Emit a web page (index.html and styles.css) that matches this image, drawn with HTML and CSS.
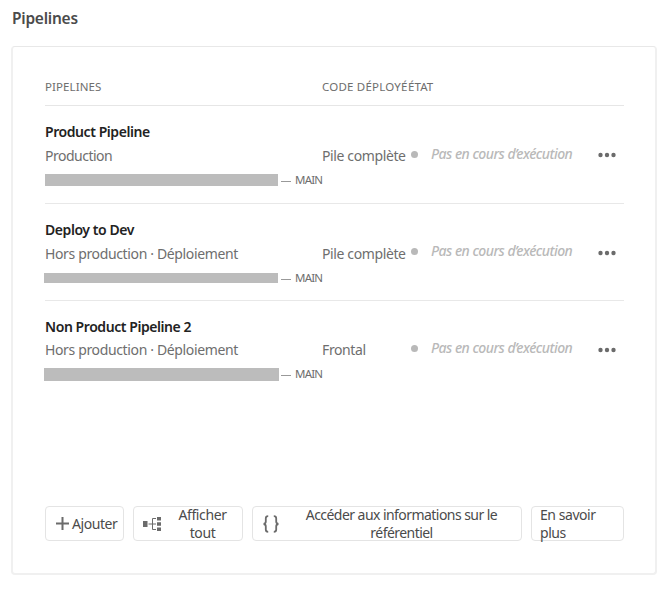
FILE: index.html
```html
<!DOCTYPE html>
<html lang="fr">
<head>
<meta charset="utf-8">
<title>Pipelines</title>
<link rel="stylesheet" href="styles.css">
</head>
<body>
<h1 class="heading">Pipelines</h1>
<main class="card">
  <div class="grid table-head"><span>PIPELINES</span><span class="head-code">CODE DÉPLOYÉ</span><span>ÉTAT</span></div>
  <section class="grid row">
    <div class="info">
      <h2 class="name">Product Pipeline</h2>
      <p class="kind kind-prod">Production</p>
      <div class="repo"><span class="redacted"></span><span class="dash"></span><span class="branch">MAIN</span></div>
    </div>
    <span class="code">Pile complète</span>
    <div class="state"><i class="dot"></i><em>Pas en cours d’exécution</em></div>
    <svg class="more" viewBox="0 0 18 6"><circle cx="2.5" cy="3" r="2.2"/><circle cx="9" cy="3" r="2.2"/><circle cx="15.5" cy="3" r="2.2"/></svg>
  </section>
  <section class="grid row row-second">
    <div class="info">
      <h2 class="name">Deploy to Dev</h2>
      <p class="kind">Hors production · Déploiement</p>
      <div class="repo"><span class="redacted redacted-thin"></span><span class="dash"></span><span class="branch">MAIN</span></div>
    </div>
    <span class="code">Pile complète</span>
    <div class="state"><i class="dot"></i><em>Pas en cours d’exécution</em></div>
    <svg class="more" viewBox="0 0 18 6"><circle cx="2.5" cy="3" r="2.2"/><circle cx="9" cy="3" r="2.2"/><circle cx="15.5" cy="3" r="2.2"/></svg>
  </section>
  <section class="grid row row-last">
    <div class="info">
      <h2 class="name">Non Product Pipeline 2</h2>
      <p class="kind">Hors production · Déploiement</p>
      <div class="repo"><span class="redacted redacted-wide"></span><span class="dash"></span><span class="branch">MAIN</span></div>
    </div>
    <span class="code">Frontal</span>
    <div class="state"><i class="dot"></i><em>Pas en cours d’exécution</em></div>
    <svg class="more" viewBox="0 0 18 6"><circle cx="2.5" cy="3" r="2.2"/><circle cx="9" cy="3" r="2.2"/><circle cx="15.5" cy="3" r="2.2"/></svg>
  </section>
  <footer class="actions">
    <button class="btn btn-add"><svg class="icon-plus" viewBox="0 0 13 13"><path d="M6.5 0v13M0 6.5h13"/></svg><span>Ajouter</span></button>
    <button class="btn btn-all"><svg class="icon-tree" viewBox="0 0 18 16"><path class="block" d="M0 5h4.5v6H0zM14 1h4v3.5h-4zM14 6.3h4v3.5h-4zM14 11.6h4v3.5h-4z"/><path class="line" d="M5.5 8h7.5M13 2.5H9.5v11H13"/></svg><span class="label">Afficher<br>tout</span></button>
    <button class="btn btn-repo"><svg class="icon-braces" viewBox="0 0 16 18"><path d="M5.2 1.2C3.2 1.2 2.8 2 2.8 3.2v3.3C2.8 8 2.2 8.8.6 9c1.6.2 2.2 1 2.2 2.5v3.3c0 1.2.4 2 2.4 2M10.8 1.2c2 0 2.4.8 2.4 2v3.3c0 1.5.6 2.3 2.2 2.5-1.6.2-2.2 1-2.2 2.5v3.3c0 1.2-.4 2-2.4 2"/></svg><span class="label">Accéder aux informations sur le<br>référentiel</span></button>
    <button class="btn btn-more"><span>En savoir<br>plus</span></button>
  </footer>
</main>
</body>
</html>
```
FILE: styles.css
```css
* { box-sizing: border-box; }
body { margin: 0; width: 662px; height: 606px; overflow: hidden; background: #fff; color: #6e6e6e; font: 14px/18px "Noto Sans", sans-serif; letter-spacing: -.45px; }
h1, h2, p { margin: 0; }
.heading { margin: 7px 0 0 12px; font-size: 15.5px; line-height: 22px; font-weight: 600; letter-spacing: -.25px; color: #4b4b4b; }
.card { width: 646px; height: 529px; margin: 17px 0 0 11px; padding: 32px 31px 32px 32px; border: 2px solid #f0f0f0; border-top: 1px solid #e8e8e8; border-radius: 4px; display: flex; flex-direction: column; }
.grid { display: grid; grid-template-columns: 277px 86px 190px 1fr; white-space: nowrap; }
.table-head { height: 27px; border-bottom: 1px solid #e6e6e6; font-size: 11.5px; line-height: 16px; letter-spacing: .1px; }
.head-code { letter-spacing: .2px; }
.row { height: 98px; padding-top: 16px; border-bottom: 1px solid #e8e8e8; }
.row-second { height: 97px; }
.row-last { border: 0; }
.name { font-size: 14px; line-height: 20px; font-weight: 600; color: #222; letter-spacing: -.43px; }
.kind { margin-top: 4px; line-height: 20px; letter-spacing: -.36px; }
.kind-prod { letter-spacing: -.5px; }
.repo { display: flex; align-items: center; height: 14px; margin-top: 7px; }
.row-last .kind { margin-top: 3px; }
.redacted { width: 233px; height: 12px; background: #bcbcbc; flex: none; }
.redacted-thin { width: 234px; height: 10px; margin-left: -1px; }
.redacted-wide { width: 235px; height: 13px; margin-left: -1px; margin-right: -1px; }
.dash { width: 10px; height: 1px; margin: 2px 4px 0 3px; background: #999; flex: none; }
.branch { font-size: 11.5px; line-height: 14px; letter-spacing: -.8px; }
.code { padding-top: 24px; line-height: 20px; letter-spacing: -.38px; }
.row-last .code { padding-top: 23px; }
.state { display: flex; align-items: center; height: 20px; margin: 22px 0 0 3px; color: #b9b9b9; }
.row-second .state, .row-last .state { margin-top: 21px; }
.state em { margin-left: 13px; font-weight: 500; letter-spacing: -.53px; }
.dot { width: 7px; height: 7px; border-radius: 50%; background: #b9b9b9; }
.more { width: 18px; height: 6px; margin-top: 30px; fill: #6b6b6b; }
.actions { display: flex; gap: 9px; margin-top: auto; height: 35px; }
.btn { display: flex; align-items: center; border: 1px solid #e4e4e4; border-radius: 4px; background: #fff; color: #4b4b4b; font: inherit; letter-spacing: inherit; white-space: nowrap; }
.btn svg { flex: none; fill: none; stroke: #6b6b6b; }
.btn .label { flex: 1; text-align: center; }
.btn-add { width: 79px; padding: 0 0 0 10px; gap: 3px; }
.btn-all { width: 110px; padding: 0 9px; }
.btn-all .label { padding-left: 11px; letter-spacing: -.4px; }
.btn-repo { width: 270px; padding: 0 10px; }
.btn-repo .label { padding-left: 13px; letter-spacing: -.55px; }
.btn-more { width: 93px; padding: 0 8px; text-align: left; }
.icon-plus { width: 13px; height: 13px; stroke-width: 2; }
.icon-tree { width: 18px; height: 16px; }
.icon-tree .block { fill: #6b6b6b; stroke: none; }
.icon-tree .line { stroke-width: 1; }
.icon-braces { width: 16px; height: 18px; stroke-width: 1.8; }
```
